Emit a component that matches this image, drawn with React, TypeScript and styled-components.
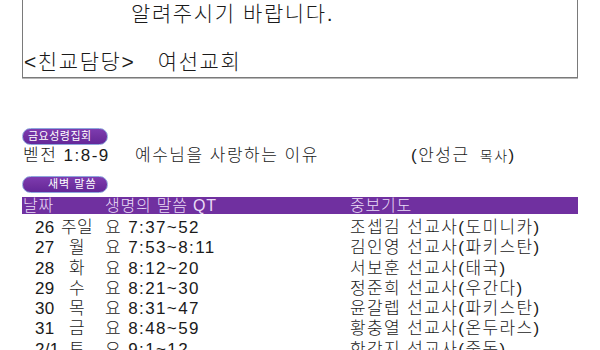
import styled, { createGlobalStyle } from "styled-components";

const GlobalStyle = createGlobalStyle`
  html, body {
    margin: 0;
    padding: 0;
    background: #ffffff;
  }
  body {
    font-family: "Liberation Sans", "Noto Sans CJK KR", sans-serif;
    color: #1a1a1a;
    overflow: hidden;
  }
`;

const PURPLE = "#7030a0";

const Page = styled.div`
  width: 556px;
  padding: 0 22px;
`;

const NoticeBox = styled.div`
  margin-top: -10px;
  padding: 11px 0 3px 1px;
  border: 1px solid #7a7a7a;
  box-shadow: 0 1px 0 #b8b8b8;
`;

const NoticeLine = styled.div<{ $indent?: number; $gap?: number }>`
  font-size: 21px;
  line-height: 24px;
  height: 24px;
  letter-spacing: 1.6px;
  white-space: pre;
  padding-left: ${(p) => p.$indent ?? 0}px;
  margin-top: ${(p) => p.$gap ?? 0}px;
  font-weight: 300;
`;

const Pill = styled.div<{ $pad: number; $top: number; $spacing: number }>`
  box-sizing: border-box;
  width: 86px;
  height: 17px;
  margin-top: ${(p) => p.$top}px;
  padding-left: ${(p) => p.$pad}px;
  border: 1px solid #8ea6dc;
  border-radius: 9px;
  background: linear-gradient(#7d3cb0, ${PURPLE} 55%, #63279a);
  color: #ffffff;
  font-size: 11px;
  line-height: 15px;
  letter-spacing: ${(p) => p.$spacing}px;
  white-space: nowrap;
`;

const SermonRow = styled.div`
  display: flex;
  align-items: baseline;
  height: 22px;
  line-height: 22px;
  font-size: 17px;
  font-weight: 300;
  letter-spacing: 1.5px;
  padding-left: 1px;
  white-space: pre;
`;

const Verse = styled.span`
  width: 112px;
`;

const Title = styled.span`
  width: 276px;
`;

const Small = styled.span`
  font-size: 14px;
  margin-left: 4px;
`;

const Table = styled.div`
  margin-top: 4px;
`;

const HeaderBar = styled.div`
  display: grid;
  grid-template-columns: 82px 245px 1fr;
  height: 17px;
  line-height: 17px;
  background: ${PURPLE};
  color: #eadcf6;
  font-size: 16px;
  font-weight: 300;
  letter-spacing: 0.8px;
  padding-left: 1px;
`;

const Rows = styled.div`
  padding-top: 4px;
`;

const Row = styled.div`
  display: grid;
  grid-template-columns: 83px 245px 1fr;
  height: 20.25px;
  line-height: 20.25px;
  font-size: 17px;
  font-weight: 300;
  letter-spacing: 1.4px;
  white-space: nowrap;
`;

const DateCell = styled.div`
  display: flex;
  padding-left: 13px;
  letter-spacing: 0.3px;
`;

const DateNum = styled.span`
  width: 25px;
`;

const DayName = styled.span`
  width: 34px;
  text-align: center;
`;

const rows = [
  ["26", "주일", "요 7:37~52", "조셉김 선교사(도미니카)"],
  ["27", "월", "요 7:53~8:11", "김인영 선교사(파키스탄)"],
  ["28", "화", "요 8:12~20", "서보훈 선교사(태국)"],
  ["29", "수", "요 8:21~30", "정준희 선교사(우간다)"],
  ["30", "목", "요 8:31~47", "윤갈렙 선교사(파키스탄)"],
  ["31", "금", "요 8:48~59", "황충열 선교사(온두라스)"],
  ["2/1", "토", "요 9:1~12", "한강지 선교사(중동)"],
];

export default function App() {
  return (
    <Page>
      <GlobalStyle />
      <NoticeBox>
        <NoticeLine $indent={107}>알려주시기 바랍니다.</NoticeLine>
        <NoticeLine $gap={24}>{"<친교담당>   여선교회"}</NoticeLine>
      </NoticeBox>

      <Pill $pad={5} $top={50} $spacing={0.5}>
        금요성령집회
      </Pill>
      <SermonRow>
        <Verse>벧전 1:8-9</Verse>
        <Title>예수님을 사랑하는 이유</Title>
        <span>
          (안성근 <Small>목사</Small>)
        </span>
      </SermonRow>

      <Pill $pad={25} $top={9} $spacing={1}>
        새벽 말씀
      </Pill>
      <Table>
        <HeaderBar>
          <span>날짜</span>
          <span>생명의 말씀 QT</span>
          <span>중보기도</span>
        </HeaderBar>
        <Rows>
          {rows.map(([num, day, qt, prayer]) => (
            <Row key={num}>
              <DateCell>
                <DateNum>{num}</DateNum>
                <DayName>{day}</DayName>
              </DateCell>
              <span>{qt}</span>
              <span>{prayer}</span>
            </Row>
          ))}
        </Rows>
      </Table>
    </Page>
  );
}
